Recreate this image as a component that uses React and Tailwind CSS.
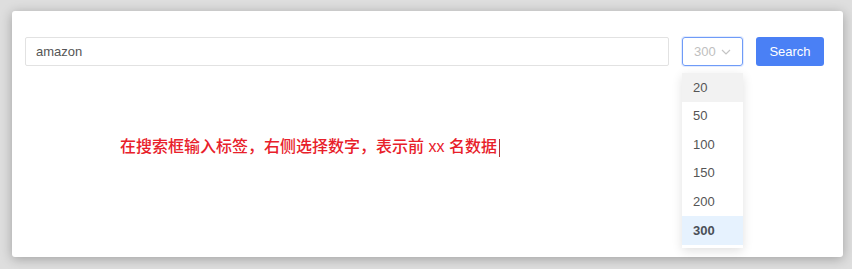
import React from 'react';

const options = ['20', '50', '100', '150', '200', '300'];

const App = () => {
  return (
    <div className="h-[269px] w-[852px] bg-[#dedede] pt-[11px] pl-[12px] font-['Liberation_Sans','Noto_Sans_CJK_SC',sans-serif]">
      <div className="relative h-[246px] w-[831px] rounded-[3px] bg-white shadow-[0_2px_12px_rgba(0,0,0,0.28)]">
        {/* search row */}
        <div className="flex items-center pt-[26px] pl-[13px]">
          <input
            className="h-[29px] w-[644px] rounded-[2px] border border-[#e2e2e2] px-[10px] text-[13px] text-[#555] outline-none"
            defaultValue="amazon"
          />
          <div className="relative ml-[13px]">
            <div className="flex h-[29px] w-[61px] items-center justify-between rounded-[3px] border border-[#6f9bf7] px-[11px] text-[13px] text-[#c0c0c0] shadow-[0_0_0_1px_rgba(64,128,255,0.15)]">
              <span>300</span>
              <svg width="10" height="6" viewBox="0 0 10 6" fill="none" stroke="#c4c4c4" strokeWidth="1.2">
                <path d="M1 1l4 4 4-4" />
              </svg>
            </div>
            {/* dropdown */}
            <div className="absolute left-0 top-[36px] z-10 w-[61px] bg-white pb-[3px] shadow-[0_3px_10px_rgba(0,0,0,0.12)]">
              {options.map((o, i) => (
                <div
                  key={o}
                  className={
                    i === 0
                      ? 'flex h-[28.6px] items-center bg-[#f2f2f2] px-[11px] text-[13px] text-[#555]'
                      : i === options.length - 1
                      ? 'flex h-[28.6px] items-center bg-[#e6f2fe] px-[11px] text-[13px] font-semibold text-[#4a4f57]'
                      : 'flex h-[28.6px] items-center px-[11px] text-[13px] text-[#555]'
                  }
                >
                  {o}
                </div>
              ))}
            </div>
          </div>
          <button className="ml-[13px] h-[29px] w-[68px] rounded-[3px] bg-[#4a80f5] text-[13px] text-white">
            Search
          </button>
        </div>

        {/* hint text */}
        <div className="mt-[70px] pl-[108px] text-[16px] font-medium leading-[22px] text-[#e8202a]">
          在搜索框输入标签，右侧选择数字，表示前 xx 名数据<span className="ml-[2px] inline-block h-[18px] w-[1px] bg-[#b03030] align-middle" />
        </div>
      </div>
    </div>
  );
};

export default App;
